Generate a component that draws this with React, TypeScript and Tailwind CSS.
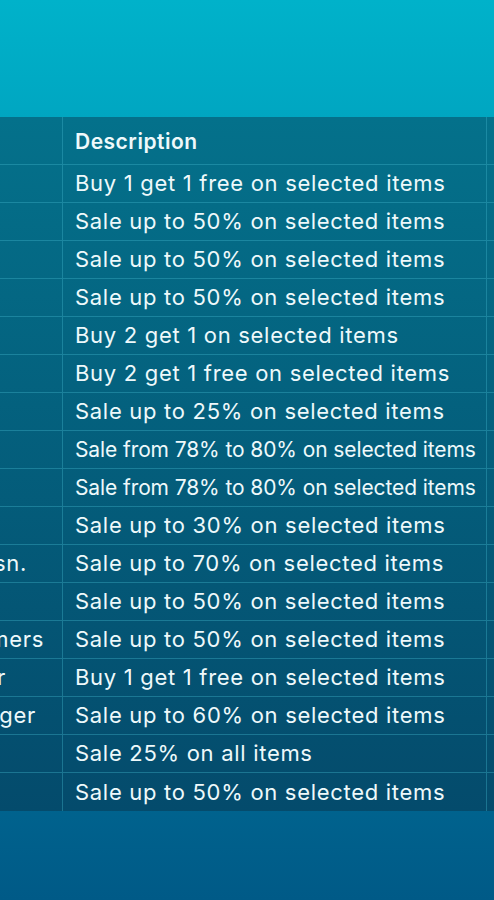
import React from "react";

type Row = { name: string; pr: string; desc: string; small?: boolean };

const rows: Row[] = [
  { name: "", pr: "pr-[20px]", desc: "Buy 1 get 1 free on selected items" },
  { name: "", pr: "pr-[20px]", desc: "Sale up to 50% on selected items" },
  { name: "", pr: "pr-[20px]", desc: "Sale up to 50% on selected items" },
  { name: "", pr: "pr-[20px]", desc: "Sale up to 50% on selected items" },
  { name: "", pr: "pr-[20px]", desc: "Buy 2 get 1 on selected items" },
  { name: "", pr: "pr-[20px]", desc: "Buy 2 get 1 free on selected items" },
  { name: "", pr: "pr-[20px]", desc: "Sale up to 25% on selected items" },
  { name: "", pr: "pr-[20px]", desc: "Sale from 78% to 80% on selected items", small: true },
  { name: "", pr: "pr-[20px]", desc: "Sale from 78% to 80% on selected items", small: true },
  { name: "", pr: "pr-[20px]", desc: "Sale up to 30% on selected items" },
  { name: "Retail Assn.", pr: "pr-[35px]", desc: "Sale up to 70% on selected items" },
  { name: "", pr: "pr-[20px]", desc: "Sale up to 50% on selected items" },
  { name: "Loyal customers", pr: "pr-[18px]", desc: "Sale up to 50% on selected items" },
  { name: "Member", pr: "pr-[56px]", desc: "Buy 1 get 1 free on selected items" },
  { name: "Ginger", pr: "pr-[26px]", desc: "Sale up to 60% on selected items" },
  { name: "", pr: "pr-[20px]", desc: "Sale 25% on all items" },
  { name: "", pr: "pr-[20px]", desc: "Sale up to 50% on selected items" },
];

export default function App() {
  return (
    <div className="h-[900px] w-full overflow-hidden bg-gradient-to-b from-[#00b2ca] to-[#005a87] font-['Inter','Noto_Sans',sans-serif] text-[#eef9fb]">
      <div className="pt-[117px]">
        <div className="ml-[-200px] w-[800px] bg-gradient-to-b from-[#04718b] to-[#044b6c]">
          <div className="flex h-[48px] border-b border-[#3fb1c8]/40">
            <div className="w-[263px] shrink-0 border-r border-[#3fb1c8]/40" />
            <div className="flex w-[424px] shrink-0 items-center border-r border-[#3fb1c8]/40 px-[12px] pt-[2px] text-[21px] font-semibold tracking-[0.5px]">
              Description
            </div>
            <div className="flex-1" />
          </div>
          {rows.map((r, i) => (
            <div
              key={i}
              className="flex h-[38px] border-b border-[#3fb1c8]/40 last:border-b-0"
            >
              <div
                className={`flex w-[263px] shrink-0 items-center justify-end overflow-hidden whitespace-nowrap border-r border-[#3fb1c8]/40 text-[22px] tracking-[0.7px] ${r.pr}`}
              >
                {r.name}
              </div>
              <div
                className={
                  r.small
                    ? "flex w-[424px] shrink-0 items-center whitespace-nowrap border-r border-[#3fb1c8]/40 px-[12px] text-[21px] tracking-[-0.1px]"
                    : "flex w-[424px] shrink-0 items-center whitespace-nowrap border-r border-[#3fb1c8]/40 px-[12px] text-[22px] tracking-[0.7px]"
                }
              >
                {r.desc}
              </div>
              <div className="flex-1" />
            </div>
          ))}
        </div>
      </div>
    </div>
  );
}
